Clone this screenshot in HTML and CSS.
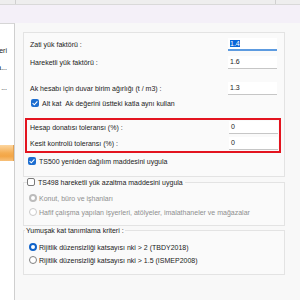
FILE: index.html
```html
<!DOCTYPE html>
<html lang="tr">
<head>
<meta charset="utf-8">
<link rel="stylesheet" href="styles.css">
</head>
<body>
<div class="top"><div class="seg1"></div><div class="seg2"></div><div class="seg3"></div></div>
<div class="ribbon"></div>
<div class="main">
  <aside class="side">
    <div class="cut c1"><span>Eleman seçenekleri</span></div>
    <div class="cut c2"><span>Döşeme ayarla...</span></div>
    <div class="cut c3"><span>...</span></div>
    <div class="obtn"></div>
  </aside>
  <div class="content">
    <div class="group g1">
      <div class="row"><span class="lbl">Zati yük faktörü :</span><span class="field focus"><span class="sel">1.4</span></span></div>
      <div class="row r2"><span class="lbl">Hareketli yük faktörü :</span><span class="field">1.6</span></div>
      <div class="row r3"><span class="lbl">Ak hesabı için duvar birim ağırlığı (t / m3) :</span><span class="field">1.3</span></div>
      <div class="chkrow altkat"><span class="cb on"><svg viewBox="0 0 8 8" width="8" height="8"><path d="M1.6 4.2 L3.3 5.8 L6.4 2.3" fill="none" stroke="#fff" stroke-width="1.1"/></svg></span><span>Alt kat&nbsp;&nbsp;Ak değerini üstteki katla aynı kullan</span></div>
      <div class="tol">
        <div class="row"><span class="lbl">Hesap donatısı toleransı (%) :</span><span class="field">0</span></div>
        <div class="row r2b"><span class="lbl">Kesit kontrolü toleransı (%) :</span><span class="field">0</span></div>
      </div>
      <div class="chkrow ts500"><span class="cb on"><svg viewBox="0 0 8 8" width="8" height="8"><path d="M1.6 4.2 L3.3 5.8 L6.4 2.3" fill="none" stroke="#fff" stroke-width="1.1"/></svg></span><span>TS500 yeniden dağılım maddesini uygula</span></div>
    </div>
    <fieldset class="group g2">
      <legend class="chkrow"><span class="cb off"></span><span>TS498 hareketli yük azaltma maddesini uygula</span></legend>
      <div class="radrow first dis"><span class="rb dis-on"></span><span>Konut, büro ve işhanları</span></div>
      <div class="radrow dis"><span class="rb dis-off"></span><span>Hafif çalışma yapılan işyerleri, atölyeler, imalathaneler ve mağazalar</span></div>
    </fieldset>
    <fieldset class="group g3">
      <legend class="txtlegend">Yumuşak kat tanımlama kriteri :</legend>
      <div class="radrow first"><span class="rb on"></span><span>Rijitlik düzensizliği katsayısı nki &gt; 2 (TBDY2018)</span></div>
      <div class="radrow"><span class="rb off"></span><span>Rijitlik düzensizliği katsayısı nki &gt; 1.5 (ISMEP2008)</span></div>
    </fieldset>
  </div>
</div>
</body>
</html>
```
FILE: styles.css
```css
html, body {
  margin: 0;
  padding: 0;
}
body {
  width: 300px;
  height: 300px;
  overflow: hidden;
  background: #f8f8f8;
  font-family: "Liberation Sans", Arial, sans-serif;
  font-size: 7px;
  color: #222;
}
.top {
  height: 4px;
  background: #eeeeee;
  border-bottom: 1px solid #d9d9d9;
  display: flex;
}
.seg1 { width: 15px; border-right: 1px solid #d0d0d0; }
.seg2 { width: 259px; border-right: 1px solid #d0d0d0; }
.seg3 { flex: 1; }
.ribbon {
  height: 18px;
  background: #f4f0f8;
}
.main {
  display: flex;
  height: 277px;
}
.side {
  width: 14px;
  flex-shrink: 0;
  background: #fff;
  border-top: 1px solid #d6d6d6;
  border-right: 1px solid #cfcfcf;
  display: flex;
  flex-direction: column;
}
.cut {
  display: flex;
  justify-content: flex-end;
  overflow: hidden;
  white-space: nowrap;
  padding-right: 7px;
  height: 9px;
  line-height: 9px;
}
.cut span { flex-shrink: 0; }
.c1 { margin-top: 22px; }
.c2 { margin-top: 8px; }
.c3 { margin-top: 11px; }
.obtn {
  margin-top: 53px;
  height: 16px;
  width: 13px;
  background: linear-gradient(#fcd6a0, #f5ad52 50%, #f3a646 70%, #f7c07a);
  border-right: 1px solid #e3a050;
}
.content {
  flex: 1;
  padding: 9px 0 0 8px;
}
.group {
  width: 262px;
  box-sizing: border-box;
  border: 1px solid #e3e3e3;
  background: #fafafa;
}
.g1 {
  height: 145px;
  padding: 5px 7px 0 6px;
}
.row {
  display: flex;
  align-items: center;
  justify-content: space-between;
  height: 13px;
}
.r2 { margin-top: 5px; }
.r3 { margin-top: 13px; }
.r2b { margin-top: 3px; }
.field {
  width: 49px;
  height: 13px;
  box-sizing: border-box;
  background: #fff;
  border-bottom: 1px solid #c6c6c6;
  padding-left: 2px;
  line-height: 12px;
  color: #222;
}
.field.focus { border-bottom: 2px solid #5d9be0; line-height: 11px; }
.sel { background: #0b66d8; color: #fff; }
.chkrow {
  display: flex;
  align-items: center;
  gap: 3px;
  height: 10px;
  white-space: nowrap;
}
.altkat { margin-top: 3px; padding-left: 1px; }
.ts500 { margin-top: 3px; margin-left: -2px; }
.cb {
  width: 8px;
  height: 8px;
  box-sizing: border-box;
  border-radius: 2px;
  flex-shrink: 0;
  display: flex;
}
.cb.on { background: #1c6dd0; }
.cb.off { background: #fff; border: 1px solid #7a7a7a; }
.tol {
  margin: 10px -4px 0 -5px;
  border: 2px solid #e3141f;
  padding: 1px 1px 1px 3px;
}
fieldset.group {
  margin: 0;
  padding: 0 0 0 5px;
  min-width: 0;
}
.g2 {
  margin-top: 7px;
  height: 49px;
}
.g2 legend {
  margin-left: -2px;
  padding: 0 2px 0 0;
}
.g3 {
  margin-top: 5px;
  height: 49px;
}
.txtlegend {
  margin-left: -4px;
  padding: 0 1px;
  height: 9px;
  line-height: 9px;
}
.radrow {
  display: flex;
  align-items: center;
  gap: 2px;
  height: 10px;
  margin-top: 4px;
  white-space: nowrap;
}
.g2 .radrow.first { margin-top: 6px; }
.g3 .radrow.first { margin-top: 7px; }
.g3 .radrow { margin-top: 3px; }
.radrow.dis { color: #8f8f8f; }
.rb {
  width: 8px;
  height: 8px;
  box-sizing: border-box;
  border-radius: 50%;
  flex-shrink: 0;
  background: #fff;
}
.rb.on { border: 2.5px solid #0f62c9; }
.rb.off { border: 1px solid #808080; }
.rb.dis-on { border: 2.5px solid #bcbcbc; }
.rb.dis-off { border: 1px solid #cacaca; }
```
